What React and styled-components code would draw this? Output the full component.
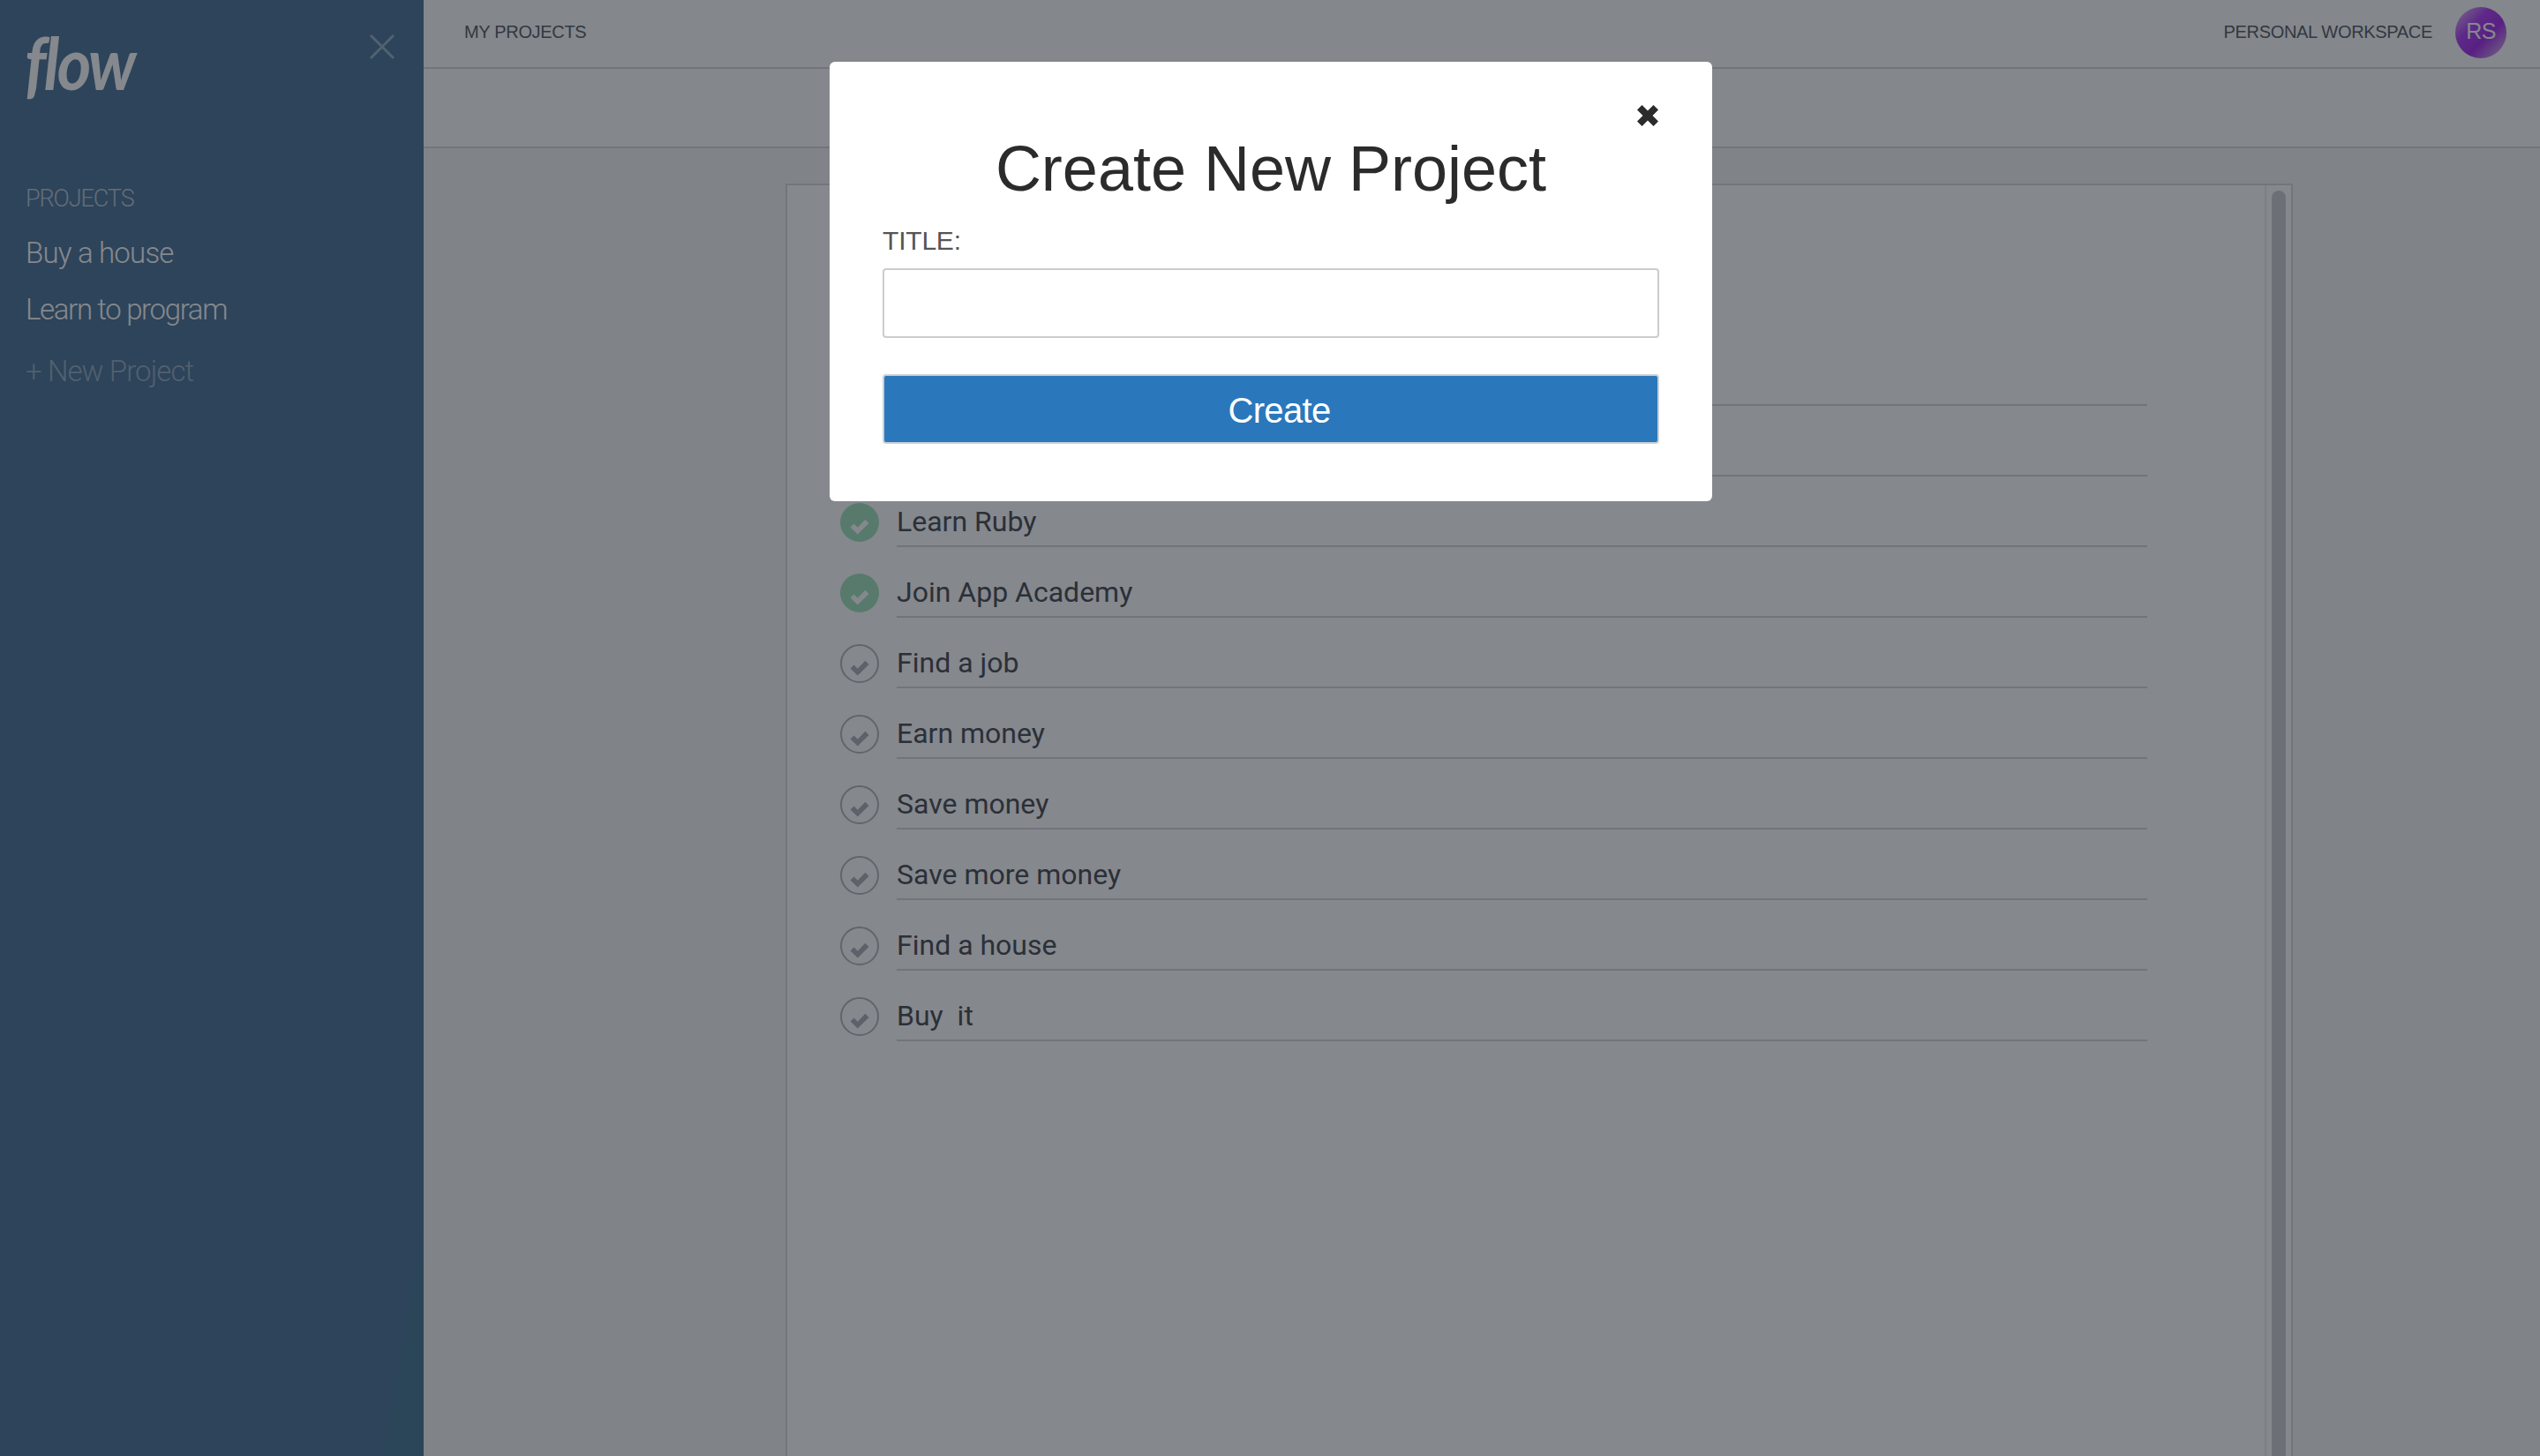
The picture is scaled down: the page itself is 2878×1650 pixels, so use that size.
import React from "react";
import styled, { createGlobalStyle } from "styled-components";

const Global = createGlobalStyle`
  html, body { margin: 0; padding: 0; height: 100%; background: #f5f5f4; overflow: hidden; }
  #root { height: 100%; }
  * { box-sizing: border-box; }
`;

const Page = styled.div`
  display: flex;
  width: 2878px;
  height: 1650px;
  overflow: hidden;
  font-family: "Liberation Sans", Arial, sans-serif;
`;
const Sidebar = styled.aside`
  width: 480px;
  flex: none;
  position: relative;
  padding: 0 29px;
  background:
    linear-gradient(100deg, transparent 94%, rgba(60, 130, 140, 0.2) 94.2%),
    linear-gradient(178deg, #4f7799 0%, #4e7698 100%);
  color: #fff;
`;
const Logo = styled.div`
  height: 116px;
  padding-top: 28px;
  margin-left: -1px;
  font-family: Lato, sans-serif;
  font-style: italic;
  font-weight: 700;
  font-size: 82px;
  line-height: 84px;
  letter-spacing: -3px;
  color: #fff;
  transform: scaleX(0.9);
  transform-origin: left center;
`;
const CloseSide = styled.button`
  position: absolute;
  top: 38px;
  right: 32px;
  width: 30px;
  height: 30px;
  padding: 0;
  border: 0;
  background: none;
  color: rgba(255, 255, 255, 0.42);
`;
const SideLabel = styled.div`
  margin-top: 93px;
  font: 300 27px/32px Roboto, sans-serif;
  letter-spacing: -1.1px;
  color: rgba(255, 255, 255, 0.62);
`;
const SideLink = styled.div`
  margin-top: ${(p) => p.$gap}px;
  font: 300 33px/40px Roboto, sans-serif;
  letter-spacing: ${(p) => p.$track}px;
  color: ${(p) => (p.$muted ? "rgba(255,255,255,.42)" : "#fff")};
`;
const Main = styled.main`
  flex: 1;
  display: flex;
  flex-direction: column;
  min-width: 0;
`;
const TopBar = styled.header`
  height: 78px;
  flex: none;
  display: flex;
  align-items: center;
  justify-content: space-between;
  padding: 0 38px 4px 46px;
  background: #fdfdfc;
  border-bottom: 2px solid #d8d8da;
`;
const TopLabel = styled.span`
  font-size: 20px;
  letter-spacing: -0.32px;
  color: #5b5f66;
`;
const Account = styled.div`
  display: flex;
  align-items: center;
  gap: 26px;
`;
const Avatar = styled.div`
  width: 58px;
  height: 58px;
  margin-top: 2px;
  padding-bottom: 4px;
  border-radius: 50%;
  display: flex;
  align-items: center;
  justify-content: center;
  font-size: 25px;
  letter-spacing: -0.5px;
  color: #fff;
  background: linear-gradient(135deg, #e4cdf5 0%, #b040f5 35%, #a52ee8 60%, #dcc3ee 100%);
`;
const SubBar = styled.div`
  height: 90px;
  flex: none;
  background: #fdfdfc;
  border-bottom: 2px solid #d8d8da;
`;
const Content = styled.div`
  flex: 1;
  display: flex;
  padding: 40px 0 0 410px;
  min-height: 0;
`;
const Card = styled.section`
  width: 1708px;
  display: flex;
  background: #fff;
  border: 2px solid #d8d8da;
  border-bottom: 0;
`;
const Body = styled.div`
  flex: 1;
  padding: 191px 0 0 60px;
`;
const Gutter = styled.div`
  width: 30px;
  flex: none;
  padding: 6px 6px 0 6px;
  border-left: 2px solid #ececee;
`;
const Thumb = styled.div`
  height: 100%;
  border-radius: 8px 8px 0 0;
  background: #cdcfd1;
`;
const Row = styled.div`
  display: flex;
  height: 80px;
  width: 1481px;
`;
const Check = styled.div`
  width: 44px;
  height: 44px;
  flex: none;
  margin: 9px 20px 0 0;
  border-radius: 50%;
  display: flex;
  align-items: center;
  justify-content: center;
  border: ${(p) => (p.$done ? "0" : "2px solid #b4b7bc")};
  background: ${(p) => (p.$done ? "#a3e2bf" : "transparent")};
  color: ${(p) => (p.$done ? "#fff" : "#adb1b8")};
  svg { margin-top: 10px; }
`;
const RowText = styled.div`
  flex: 1;
  height: 59px;
  padding-top: 9px;
  font: 400 32px/42px Roboto, sans-serif;
  white-space: pre;
  color: #4a4e55;
  border-bottom: 2px solid #d6d6d8;
`;
const Overlay = styled.div`
  position: fixed;
  inset: 0;
  background: rgba(11, 17, 27, 0.5);
  display: flex;
  justify-content: center;
  align-items: flex-start;
  padding: 70px 0 0 2px;
`;
const Modal = styled.form`
  position: relative;
  width: 1000px;
  height: 498px;
  padding: 0 60px;
  background: #fff;
  border-radius: 6px;
`;
const ModalClose = styled.button`
  position: absolute;
  top: 48px;
  right: 60px;
  width: 26px;
  height: 26px;
  padding: 0;
  border: 0;
  background: none;
  color: #2b2b2b;
`;
const Heading = styled.h1`
  margin: 0;
  padding-top: 81px;
  font-size: 72px;
  font-weight: 400;
  line-height: 80px;
  text-align: center;
  color: #2b2b2b;
`;
const FieldLabel = styled.label`
  display: block;
  margin-top: 24px;
  font-size: 30px;
  line-height: 36px;
  letter-spacing: -0.2px;
  color: #555;
`;
const Input = styled.input`
  display: block;
  width: 880px;
  height: 79px;
  margin-top: 13px;
  border: 2px solid #cccccc;
  border-radius: 4px;
  background: #fff;
`;
const Submit = styled.button`
  display: block;
  width: 880px;
  height: 79px;
  margin-top: 41px;
  padding: 3px 0 0 19px;
  border: 2px solid #ccd0d6;
  border-radius: 4px;
  background: #2a78bb;
  font: 400 40px/1 "Liberation Sans", Arial, sans-serif;
  letter-spacing: -0.7px;
  color: #fff;
`;

const Tick = () => (
  <svg width="22" height="18" viewBox="0 0 22 18" fill="currentColor" aria-hidden="true">
    <path d="M0.5 9.5 4.6 5.5l4.2 4.2L17.4 0.8 21.5 5 8.8 17.6Z" />
  </svg>
);

const tasks = [
  { text: "", done: true },
  { text: "", done: true },
  { text: "Learn Ruby", done: true },
  { text: "Join App Academy", done: true },
  { text: "Find a job" },
  { text: "Earn money" },
  { text: "Save money" },
  { text: "Save more money" },
  { text: "Find a house" },
  { text: "Buy  it" },
];

export default function App() {
  return (
    <Page>
      <Global />
      <Sidebar>
        <Logo>flow</Logo>
        <CloseSide type="button" aria-label="Close sidebar">
          <svg width="30" height="30" viewBox="0 0 30 30" fill="none" stroke="currentColor" strokeWidth="3">
            <path d="M2 2 28 28M28 2 2 28" />
          </svg>
        </CloseSide>
        <SideLabel>PROJECTS</SideLabel>
        <SideLink $gap={26} $track={-0.8}>Buy a house</SideLink>
        <SideLink $gap={24} $track={-1.35}>Learn to program</SideLink>
        <SideLink $gap={30} $track={-0.9} $muted>+ New Project</SideLink>
      </Sidebar>
      <Main>
        <TopBar>
          <TopLabel>MY PROJECTS</TopLabel>
          <Account>
            <TopLabel>PERSONAL WORKSPACE</TopLabel>
            <Avatar>RS</Avatar>
          </Account>
        </TopBar>
        <SubBar />
        <Content>
          <Card>
            <Body>
              {tasks.map((t, i) => (
                <Row key={i}>
                  <Check $done={t.done}><Tick /></Check>
                  <RowText>{t.text}</RowText>
                </Row>
              ))}
            </Body>
            <Gutter><Thumb /></Gutter>
          </Card>
        </Content>
      </Main>
      <Overlay>
        <Modal>
          <ModalClose type="button" aria-label="Close">
            <svg width="26" height="26" viewBox="0 0 26 26" fill="currentColor">
              <path d="M6.5 1 13 7.5 19.5 1 25 6.5 18.5 13 25 19.5 19.5 25 13 18.5 6.5 25 1 19.5 7.5 13 1 6.5Z" />
            </svg>
          </ModalClose>
          <Heading>Create New Project</Heading>
          <FieldLabel>TITLE:</FieldLabel>
          <Input />
          <Submit type="button">Create</Submit>
        </Modal>
      </Overlay>
    </Page>
  );
}
